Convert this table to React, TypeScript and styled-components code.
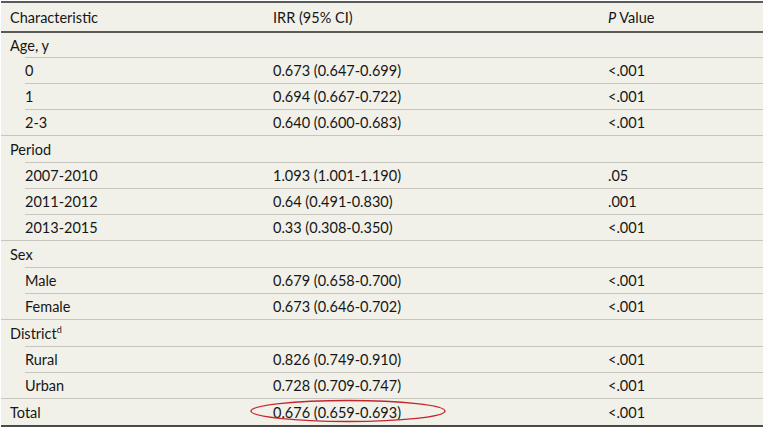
import styled, { createGlobalStyle } from "styled-components";

const Global = createGlobalStyle`
    body {
        margin: 0;
        background: #ffffff;
    }
`;

const Table = styled.div`
    width: 762px;
    margin-left: 1px;
    margin-top: 1px;
    background-color: #f1f1e9;
    border-top: 2px solid #5a5a58;
    border-bottom: 2px solid #4a4a48;
    font-family: Lato, "Open Sans", sans-serif;
    font-size: 14.5px;
    color: #161616;
`;

const Head = styled.div`
    display: grid;
    grid-template-columns: 263px 335px 1fr;
    align-items: center;
    height: 28px;
    padding-left: 9px;
    border-bottom: 2px solid #5a5a58;
`;

const Row = styled.div<{ $sub?: boolean; $first?: boolean }>`
    display: grid;
    grid-template-columns: ${(p) => (p.$sub ? "248px" : "263px")} 335px 1fr;
    align-items: center;
    height: ${(p) => (p.$first ? "24px" : p.$sub ? "25px" : "26px")};
    margin-left: ${(p) => (p.$sub ? "24px" : "0")};
    padding-left: ${(p) => (p.$sub ? "0" : "9px")};
    border-top: ${(p) => (p.$first ? "none" : "1px solid #c6c6be")};
`;

const Cell = styled.div`
    position: relative;
    white-space: nowrap;
`;

const Italic = styled.i`
    font-style: italic;
`;

const Sup = styled.sup`
    font-size: 9px;
`;

const Ring = styled.svg`
    position: absolute;
    left: -24px;
    top: -5px;
    width: 198px;
    height: 24px;
    overflow: visible;
`;

type R = { label: string; sub?: boolean; irr?: string; p?: string; sup?: string; mark?: boolean };

const rows: R[] = [
    { label: "Age, y" },
    { label: "0", sub: true, irr: "0.673 (0.647-0.699)", p: "<.001" },
    { label: "1", sub: true, irr: "0.694 (0.667-0.722)", p: "<.001" },
    { label: "2-3", sub: true, irr: "0.640 (0.600-0.683)", p: "<.001" },
    { label: "Period" },
    { label: "2007-2010", sub: true, irr: "1.093 (1.001-1.190)", p: ".05" },
    { label: "2011-2012", sub: true, irr: "0.64 (0.491-0.830)", p: ".001" },
    { label: "2013-2015", sub: true, irr: "0.33 (0.308-0.350)", p: "<.001" },
    { label: "Sex" },
    { label: "Male", sub: true, irr: "0.679 (0.658-0.700)", p: "<.001" },
    { label: "Female", sub: true, irr: "0.673 (0.646-0.702)", p: "<.001" },
    { label: "District", sup: "d" },
    { label: "Rural", sub: true, irr: "0.826 (0.749-0.910)", p: "<.001" },
    { label: "Urban", sub: true, irr: "0.728 (0.709-0.747)", p: "<.001" },
    { label: "Total", irr: "0.676 (0.659-0.693)", p: "<.001", mark: true },
];

export default function App() {
    return (
        <>
            <Global />
            <Table>
                <Head>
                    <Cell>Characteristic</Cell>
                    <Cell>IRR (95% CI)</Cell>
                    <Cell>
                        <Italic>P</Italic> Value
                    </Cell>
                </Head>
                {rows.map((r, i) => (
                    <Row key={r.label} $sub={r.sub} $first={i === 0}>
                        <Cell>
                            {r.label}
                            {r.sup && <Sup>{r.sup}</Sup>}
                        </Cell>
                        <Cell>
                            {r.irr}
                            {r.mark && (
                                <Ring viewBox="0 0 198 24">
                                    <ellipse cx="99" cy="12" rx="97" ry="10.5" fill="none" stroke="#c4262e" strokeWidth="1.4" />
                                </Ring>
                            )}
                        </Cell>
                        <Cell>{r.p}</Cell>
                    </Row>
                ))}
            </Table>
        </>
    );
}
